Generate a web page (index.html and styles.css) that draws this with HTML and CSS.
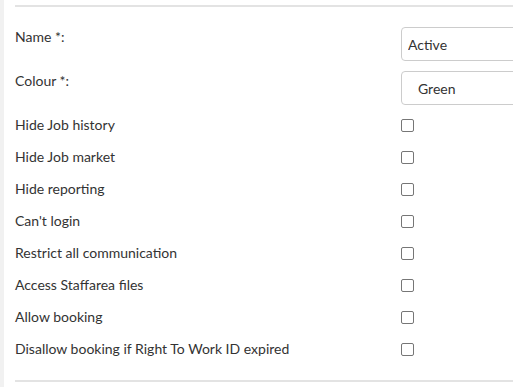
FILE: index.html
```html
<!DOCTYPE html>
<html lang="en">
<head>
    <meta charset="UTF-8">
    <title>Status settings</title>
    <link rel="stylesheet" href="styles.css">
</head>
<body>
    <div class="page">
        <div class="side-strip"></div>
        <div class="content">
            <hr class="divider top">

            <form class="status-form">
                <div class="form-row">
                    <label class="form-label" for="name">Name *:</label>
                    <div class="form-field">
                        <input class="form-control" id="name" type="text" value="Active">
                    </div>
                </div>

                <div class="form-row">
                    <label class="form-label" for="colour">Colour *:</label>
                    <div class="form-field">
                        <select class="form-control select" id="colour">
                            <option>Green</option>
                        </select>
                    </div>
                </div>

                <div class="form-row check-row">
                    <label class="form-label" for="hide-history">Hide Job history</label>
                    <div class="form-field"><input class="check" id="hide-history" type="checkbox"></div>
                </div>
                <div class="form-row check-row">
                    <label class="form-label" for="hide-market">Hide Job market</label>
                    <div class="form-field"><input class="check" id="hide-market" type="checkbox"></div>
                </div>
                <div class="form-row check-row">
                    <label class="form-label" for="hide-reporting">Hide reporting</label>
                    <div class="form-field"><input class="check" id="hide-reporting" type="checkbox"></div>
                </div>
                <div class="form-row check-row">
                    <label class="form-label" for="no-login">Can't login</label>
                    <div class="form-field"><input class="check" id="no-login" type="checkbox"></div>
                </div>
                <div class="form-row check-row">
                    <label class="form-label" for="restrict-comm">Restrict all communication</label>
                    <div class="form-field"><input class="check" id="restrict-comm" type="checkbox"></div>
                </div>
                <div class="form-row check-row">
                    <label class="form-label" for="staffarea">Access Staffarea files</label>
                    <div class="form-field"><input class="check" id="staffarea" type="checkbox"></div>
                </div>
                <div class="form-row check-row">
                    <label class="form-label" for="allow-booking">Allow booking</label>
                    <div class="form-field"><input class="check" id="allow-booking" type="checkbox"></div>
                </div>
                <div class="form-row check-row">
                    <label class="form-label" for="disallow-booking">Disallow booking if Right To Work ID expired</label>
                    <div class="form-field"><input class="check" id="disallow-booking" type="checkbox"></div>
                </div>
            </form>

            <hr class="divider bottom">
        </div>
    </div>
</body>
</html>
```

FILE: styles.css
```css
* {
    margin: 0;
    padding: 0;
    box-sizing: border-box;
}

body {
    font-family: 'Lato', 'Liberation Sans', sans-serif;
    font-size: 14px;
    line-height: 20px;
    color: #333;
    background: #fff;
    overflow: hidden;
}

.page {
    display: flex;
    min-height: 387px;
}

.side-strip {
    width: 4px;
    background: #f1f1f1;
    flex-shrink: 0;
}

.content {
    flex: 1;
    min-width: 0;
    padding-left: 11px;
}

.divider {
    border: 0;
    border-top: 2px solid #e3e3e3;
}

.divider.top {
    margin-top: 5px;
    margin-bottom: 20px;
}

.divider.bottom {
    margin-top: 19px;
}

.status-form {
    display: flex;
    flex-direction: column;
    gap: 10px;
}

.form-row {
    display: grid;
    grid-template-columns: 386px 1fr;
    align-items: start;
}

.check-row {
    min-height: 22px;
}

.form-label {
    display: block;
}

.form-field {
    display: flex;
    overflow: hidden;
}

.form-control {
    width: calc(100% + 12px);
    height: 34px;
    flex-shrink: 0;
    font-family: inherit;
    font-size: 14px;
    color: #333;
    background: #fff;
    border: 1px solid #ccc;
    border-radius: 4px;
    padding: 0 6px;
    outline: none;
}

.select {
    appearance: none;
    -webkit-appearance: none;
    padding-left: 16px;
}

.check {
    appearance: none;
    -webkit-appearance: none;
    width: 13px;
    height: 13px;
    margin-top: 4px;
    border: 1px solid #767676;
    border-radius: 2px;
    background: #fff;
}
```
